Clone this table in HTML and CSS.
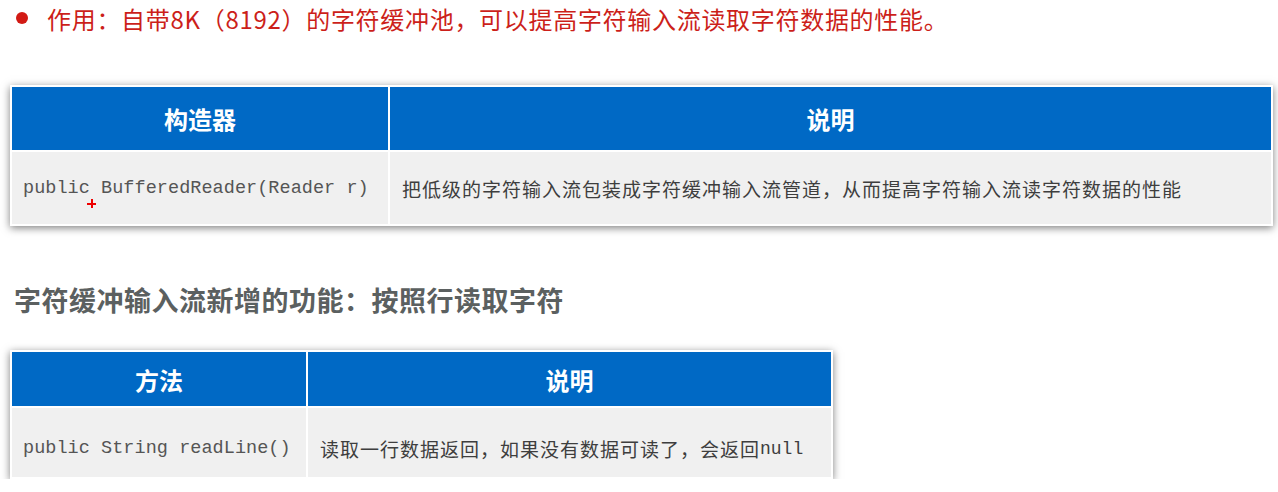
FILE: index.html
```html
<!DOCTYPE html>
<html lang="zh">
<head>
    <meta charset="UTF-8">
    <meta name="viewport" content="width=device-width, initial-scale=1.0">
    <title>BufferedReader</title>
    <link rel="stylesheet" href="styles.css">
</head>
<body>
    <div class="point">
        <span class="dot"></span>
        <span>作用：自带8K（8192）的字符缓冲池，可以提高字符输入流读取字符数据的性能。</span>
    </div>

    <div class="table table-ctor">
        <div class="th">构造器</div>
        <div class="th">说明</div>
        <div class="td code">public BufferedReader(Reader r)<span class="cursor"></span></div>
        <div class="td">把低级的字符输入流包装成字符缓冲输入流管道，从而提高字符输入流读字符数据的性能</div>
    </div>

    <h2>字符缓冲输入流新增的功能：按照行读取字符</h2>

    <div class="table table-method">
        <div class="th">方法</div>
        <div class="th">说明</div>
        <div class="td code">public String readLine()</div>
        <div class="td">读取一行数据返回，如果没有数据可读了，会返回<span class="mono">null</span></div>
    </div>
</body>
</html>
```

FILE: styles.css
```css
body {
    margin: 0;
    padding: 0;
    background: #fff;
    font-family: "Noto Sans CJK SC", "Noto Sans", sans-serif;
    overflow: hidden;
}
.point {
    display: flex;
    align-items: center;
    gap: 19px;
    padding-left: 16px;
    height: 36px;
    font-size: 24px;
    letter-spacing: 0.7px;
    color: #cc1f1a;
}
.dot {
    width: 12px;
    height: 12px;
    border-radius: 50%;
    background: #d21a14;
    flex: none;
}
.table {
    display: grid;
    gap: 2px;
    padding: 2px;
    margin-left: 10px;
    background: #fff;
    box-shadow: 0 2px 8px rgba(0, 0, 0, 0.5);
}
.table-ctor {
    width: 1259px;
    margin-top: 49px;
    grid-template-columns: 376px 1fr;
    grid-template-rows: 63px 72px;
}
.table-method {
    width: 819px;
    margin-top: 30px;
    grid-template-columns: 294px 1fr;
    grid-template-rows: 54px 69px;
}
.table-method .td {
    padding-top: 12px;
}
.th {
    background: #0069c5;
    color: #fff;
    font-size: 24px;
    font-weight: bold;
    display: flex;
    align-items: center;
    justify-content: center;
}
.td {
    background: #f0f0f0;
    color: #3e3e3e;
    font-size: 19px;
    letter-spacing: 1px;
    display: flex;
    align-items: center;
    padding-left: 12px;
    position: relative;
}
.code {
    font-family: "Liberation Mono", "DejaVu Sans Mono", monospace;
    font-size: 18.5px;
    letter-spacing: 0.05px;
    color: #555;
    padding-left: 11px;
}
.mono {
    font-family: "Liberation Mono", monospace;
    font-size: 18px;
    letter-spacing: 0;
}
.cursor {
    position: absolute;
    left: 75px;
    top: 47px;
    width: 9px;
    height: 9px;
}
.cursor::before,
.cursor::after {
    content: "";
    position: absolute;
    background: #e00;
}
.cursor::before {
    left: 0;
    top: 4px;
    width: 9px;
    height: 2px;
}
.cursor::after {
    left: 4px;
    top: 0;
    width: 2px;
    height: 9px;
}
h2 {
    margin: 54px 0 0 14px;
    height: 40px;
    line-height: 40px;
    font-size: 27px;
    font-weight: bold;
    color: #5b6060;
    letter-spacing: 0.5px;
}
```
